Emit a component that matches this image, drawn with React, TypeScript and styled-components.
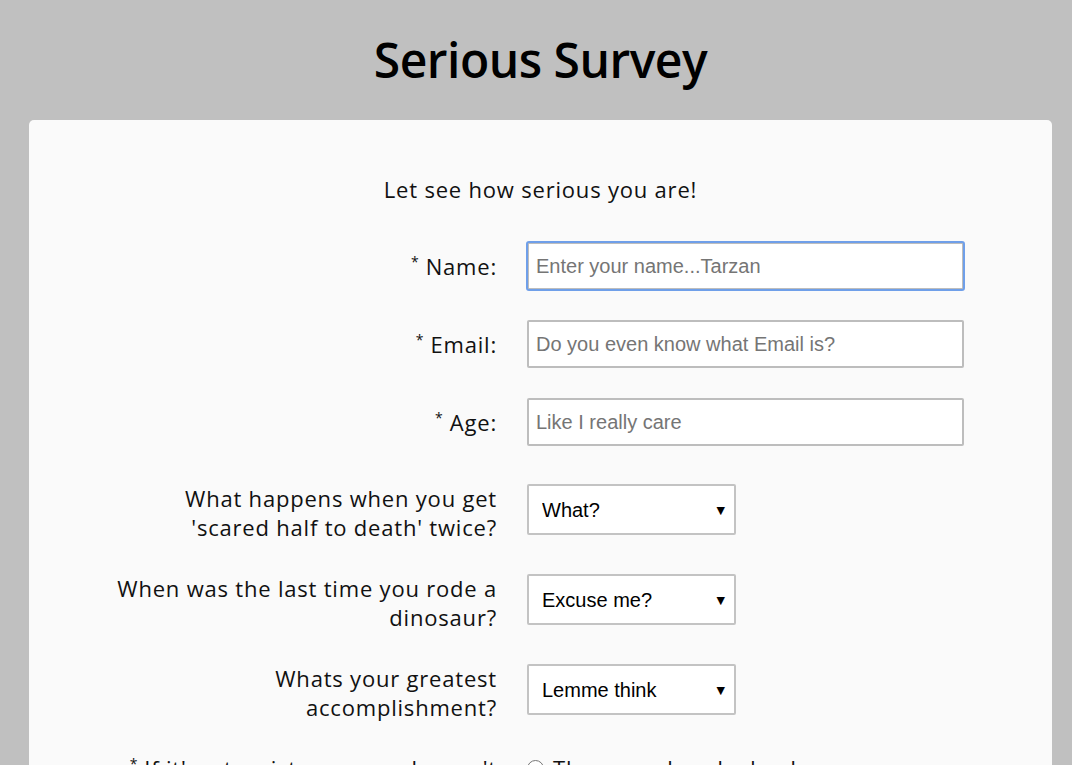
import React from "react";
import styled, { createGlobalStyle } from "styled-components";

const Global = createGlobalStyle`
  html, body { margin: 0; padding: 0; background: #c0c0c0; }
  body { font-family: "Open Sans", "Liberation Sans", sans-serif; color: #111; overflow: hidden; }
  * { box-sizing: border-box; }
`;

const Page = styled.div`
  width: 1023px;
  margin-left: 29px;
`;

const Title = styled.h1`
  margin: 0;
  padding-top: 32px;
  height: 120px;
  text-align: center;
  font-family: "Open Sans", sans-serif;
  font-weight: 600;
  font-size: 48px;
  line-height: 56px;
  letter-spacing: -0.5px;
  color: #000;
`;

const Card = styled.main`
  background: #fafafa;
  border-radius: 5px;
  padding: 54px 0 40px;
  min-height: 700px;
`;

const Subtitle = styled.p`
  margin: 0 0 38px;
  text-align: center;
  font-size: 22px;
  line-height: 30px;
  font-weight: 400;
  letter-spacing: 0.8px;
  color: #111;
`;

const Row = styled.div<{ $bottom?: number; $align?: string }>`
  display: grid;
  grid-template-columns: 468px 1fr;
  column-gap: 29px;
  align-items: ${(p) => p.$align ?? "center"};
  margin-bottom: ${(p) => p.$bottom ?? 30}px;
`;

const Label = styled.label`
  text-align: right;
  font-size: 22px;
  line-height: 29px;
  font-weight: 400;
  letter-spacing: 0.8px;
  color: #111;
  white-space: nowrap;
`;

const Req = styled.span`
  font-size: 14px;
  vertical-align: top;
  line-height: 20px;
  margin-right: 7px;
  letter-spacing: 0;
`;

const TextInput = styled.input<{ $focused?: boolean }>`
  display: block;
  width: 437px;
  height: 48px;
  margin-left: 1px;
  border: 2px solid #bdbdbd;
  border-radius: 2px;
  background: #fff;
  padding: 0 7px;
  font-family: "Liberation Sans", Arial, sans-serif;
  font-size: 20px;
  color: #222;
  outline: ${(p) => (p.$focused ? "2px solid #6f9fe9" : "none")};
  outline-offset: -1px;
  &::placeholder { color: #757575; }
`;

const SelectWrap = styled.div`
  position: relative;
  width: 209px;
  height: 51px;
  margin-left: 1px;
`;

const Select = styled.select`
  appearance: none;
  -webkit-appearance: none;
  display: block;
  width: 209px;
  height: 51px;
  border: 2px solid #c3c3c3;
  border-radius: 2px;
  background: #fff;
  padding: 0 30px 0 13px;
  font-family: "Liberation Sans", Arial, sans-serif;
  font-size: 20px;
  color: #000;
  outline: none;
`;

const Arrow = styled.span`
  position: absolute;
  right: 11px;
  top: 50%;
  transform: translateY(-50%);
  font-size: 11px;
  color: #000;
  pointer-events: none;
  font-family: "DejaVu Sans", sans-serif;
`;

const RadioList = styled.div`
  display: flex;
  flex-direction: column;
  gap: 10px;
`;

const RadioOption = styled.label`
  display: flex;
  align-items: center;
  gap: 9px;
  font-size: 22px;
  line-height: 29px;
  font-weight: 400;
  letter-spacing: 0.8px;
  color: #111;
`;

const Radio = styled.input`
  width: 17px;
  height: 17px;
  margin: 0 0 0 1px;
`;

type SelectRowProps = { lines: [string, string]; value: string };

const SelectRow = ({ lines, value }: SelectRowProps) => (
  <Row $bottom={32} $align="start">
    <Label>
      {lines[0]}
      <br />
      {lines[1]}
    </Label>
    <SelectWrap>
      <Select defaultValue={value}>
        <option>{value}</option>
      </Select>
      <Arrow>▼</Arrow>
    </SelectWrap>
  </Row>
);

export default function App() {
  return (
    <>
      <Global />
      <Page>
        <Title>Serious Survey</Title>
        <Card>
          <Subtitle>Let see how serious you are!</Subtitle>
          <Row>
            <Label>
              <Req>*</Req>Name:
            </Label>
            <TextInput $focused placeholder="Enter your name...Tarzan" />
          </Row>
          <Row>
            <Label>
              <Req>*</Req>Email:
            </Label>
            <TextInput placeholder="Do you even know what Email is?" />
          </Row>
          <Row $bottom={38}>
            <Label>
              <Req>*</Req>Age:
            </Label>
            <TextInput placeholder="Like I really care" />
          </Row>
          <SelectRow lines={["What happens when you get", "'scared half to death' twice?"]} value="What?" />
          <SelectRow lines={["When was the last time you rode a", "dinosaur?"]} value="Excuse me?" />
          <SelectRow lines={["Whats your greatest", "accomplishment?"]} value="Lemme think" />
          <Row $align="start">
            <Label>
              <Req>*</Req>If it's a tourist season, why can't
              <br />
              we shoot them?
            </Label>
            <RadioList>
              <RadioOption>
                <Radio type="radio" name="tourist" />
                They are already dead
              </RadioOption>
            </RadioList>
          </Row>
        </Card>
      </Page>
    </>
  );
}
